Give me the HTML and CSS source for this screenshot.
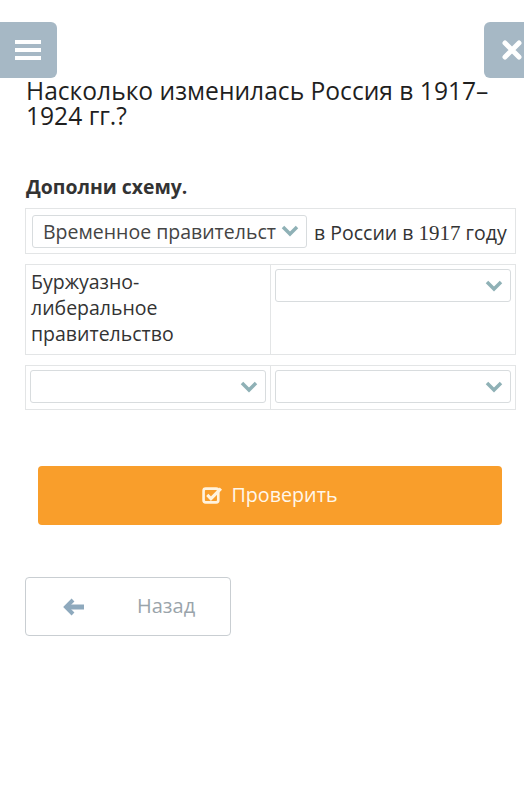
FILE: index.html
```html
<!DOCTYPE html>
<html lang="ru">
<head>
<meta charset="utf-8">
<link rel="stylesheet" href="styles.css">
</head>
<body>
<div class="page">
  <div class="topbar">
    <div class="icon-btn menu-btn">
      <svg width="26" height="22" viewBox="0 0 26 22"><rect x="0" y="1" width="26" height="4" fill="#fff"/><rect x="0" y="9" width="26" height="4" fill="#fff"/><rect x="0" y="17" width="26" height="4" fill="#fff"/></svg>
    </div>
    <div class="icon-btn close-btn">
      <svg width="22" height="22" viewBox="0 0 22 22"><path d="M4 4 L18 18 M18 4 L4 18" stroke="#fff" stroke-width="5" stroke-linecap="round"/></svg>
    </div>
  </div>
  <h1 class="title">Насколько изменилась Россия в 1917–1924 гг.?</h1>
  <h2 class="task">Дополни схему.</h2>

  <div class="row row-one">
    <div class="select select-wide">
      <span class="select-text">Временное правительст</span>
      <svg class="chev" width="18" height="12" viewBox="0 0 18 12"><path d="M2 2 L9 9 L16 2" fill="none" stroke="#8fb1b6" stroke-width="3.5"/></svg>
    </div>
    <span class="after">в России в <span class="serif">1917</span> году</span>
  </div>

  <div class="row row-grid">
    <div class="cell cell-text">Буржуазно-<br>либеральное<br>правительство</div>
    <div class="cell">
      <div class="select">
        <span class="select-text"></span>
        <svg class="chev" width="18" height="12" viewBox="0 0 18 12"><path d="M2 2 L9 9 L16 2" fill="none" stroke="#8fb1b6" stroke-width="3.5"/></svg>
      </div>
    </div>
  </div>

  <div class="row row-grid">
    <div class="cell">
      <div class="select">
        <span class="select-text"></span>
        <svg class="chev" width="18" height="12" viewBox="0 0 18 12"><path d="M2 2 L9 9 L16 2" fill="none" stroke="#8fb1b6" stroke-width="3.5"/></svg>
      </div>
    </div>
    <div class="cell">
      <div class="select">
        <span class="select-text"></span>
        <svg class="chev" width="18" height="12" viewBox="0 0 18 12"><path d="M2 2 L9 9 L16 2" fill="none" stroke="#8fb1b6" stroke-width="3.5"/></svg>
      </div>
    </div>
  </div>

  <div class="check-wrap">
    <div class="check-btn">
      <svg width="20" height="18" viewBox="0 0 20 18"><rect x="1.5" y="2.5" width="14" height="13" rx="2" fill="none" stroke="#fff3df" stroke-width="2.5"/><path d="M5 8.5 L8.5 12 L18 2.5" fill="none" stroke="#fff3df" stroke-width="3"/></svg>
      <span>Проверить</span>
    </div>
  </div>

  <div class="back-btn">
    <svg class="arrow" width="22" height="18" viewBox="0 0 22 18"><path d="M10 2 L3 9 L10 16" fill="none" stroke="#8ea9bd" stroke-width="4"/><path d="M4 9 H21" stroke="#8ea9bd" stroke-width="5"/></svg>
    <span>Назад</span>
  </div>
</div>
</body>
</html>
```
FILE: styles.css
```css
html, body {
  margin: 0;
  padding: 0;
  background: #fff;
}
body {
  font-family: "Open Sans", "Noto Sans", sans-serif;
  color: #222;
  width: 524px;
  height: 807px;
  overflow: hidden;
}
.page {
  padding-top: 22px;
}
.topbar {
  display: flex;
  justify-content: space-between;
  height: 56px;
}
.icon-btn {
  width: 56px;
  height: 56px;
  background: #a6b8c5;
  border-radius: 6px;
  display: flex;
  align-items: center;
  justify-content: center;
}
.menu-btn {
  width: 57px;
  border-radius: 0 6px 6px 0;
}
.menu-btn svg { margin-left: -1px; }
.close-btn {
  width: 40px;
  border-radius: 6px 0 0 6px;
  justify-content: flex-start;
  padding-left: 17px;
  box-sizing: border-box;
}
.title {
  margin: 0;
  padding: 0 26px;
  font-size: 24.6px;
  font-weight: 400;
  line-height: 25px;
  color: #1f1f1f;
}
.task {
  margin: 48px 0 0;
  padding: 0 26px;
  font-size: 19.4px;
  font-weight: 700;
  line-height: 22px;
  color: #333;
}
.row {
  margin: 10px 8px 0 25px;
  border: 1px solid #e3e5e6;
  box-sizing: border-box;
}
.row-one {
  margin-top: 10px;
  height: 46px;
  display: flex;
  align-items: center;
  padding-left: 6px;
}
.select {
  height: 33px;
  border: 1px solid #d8dcde;
  border-radius: 3px;
  box-sizing: border-box;
  display: flex;
  align-items: center;
  justify-content: space-between;
  padding: 0 7px 0 10px;
  background: #fff;
  font-size: 19.5px;
  color: #444;
}
.select-wide {
  width: 275px;
  padding-left: 10px;
}
.select-text {
  white-space: nowrap;
  overflow: hidden;
  flex: 1;
  line-height: 33px;
}
.chev { flex: none; margin-left: 4px; }
.after {
  margin-left: 7px;
  font-size: 19.5px;
  color: #333;
  white-space: nowrap;
  padding-top: 3px;
}
.serif {
  font-family: "Liberation Serif", "DejaVu Serif", serif;
  font-size: 21px;
}
.row-grid {
  display: grid;
  grid-template-columns: 244px 1fr;
}
.cell {
  padding: 4px 4px 6px 4px;
}
.cell + .cell {
  border-left: 1px solid #e3e5e6;
}
.cell-text {
  font-size: 19.5px;
  line-height: 26px;
  color: #333;
  padding: 4px 4px 5px 5px;
  height: 89px;
  box-sizing: border-box;
}
.row-grid .cell .select { width: 100%; }
.check-wrap {
  margin: 56px 22px 0 38px;
}
.check-btn {
  height: 59px;
  background: #f99e2b;
  border-radius: 4px;
  display: flex;
  align-items: center;
  justify-content: center;
  gap: 8px;
  color: #fff7ea;
  font-size: 19.7px;
}
.check-btn svg { width: 21px; height: 19px; }
.check-btn span { margin-top: -2px; }
.back-btn {
  margin: 52px 0 0 25px;
  width: 206px;
  height: 59px;
  border: 1px solid #c9ced2;
  border-radius: 4px;
  box-sizing: border-box;
  display: flex;
  align-items: center;
  padding-left: 37px;
  color: #9aa4ab;
  font-size: 20px;
}
.back-btn span { margin-left: 52px; margin-top: -2px; }
```
